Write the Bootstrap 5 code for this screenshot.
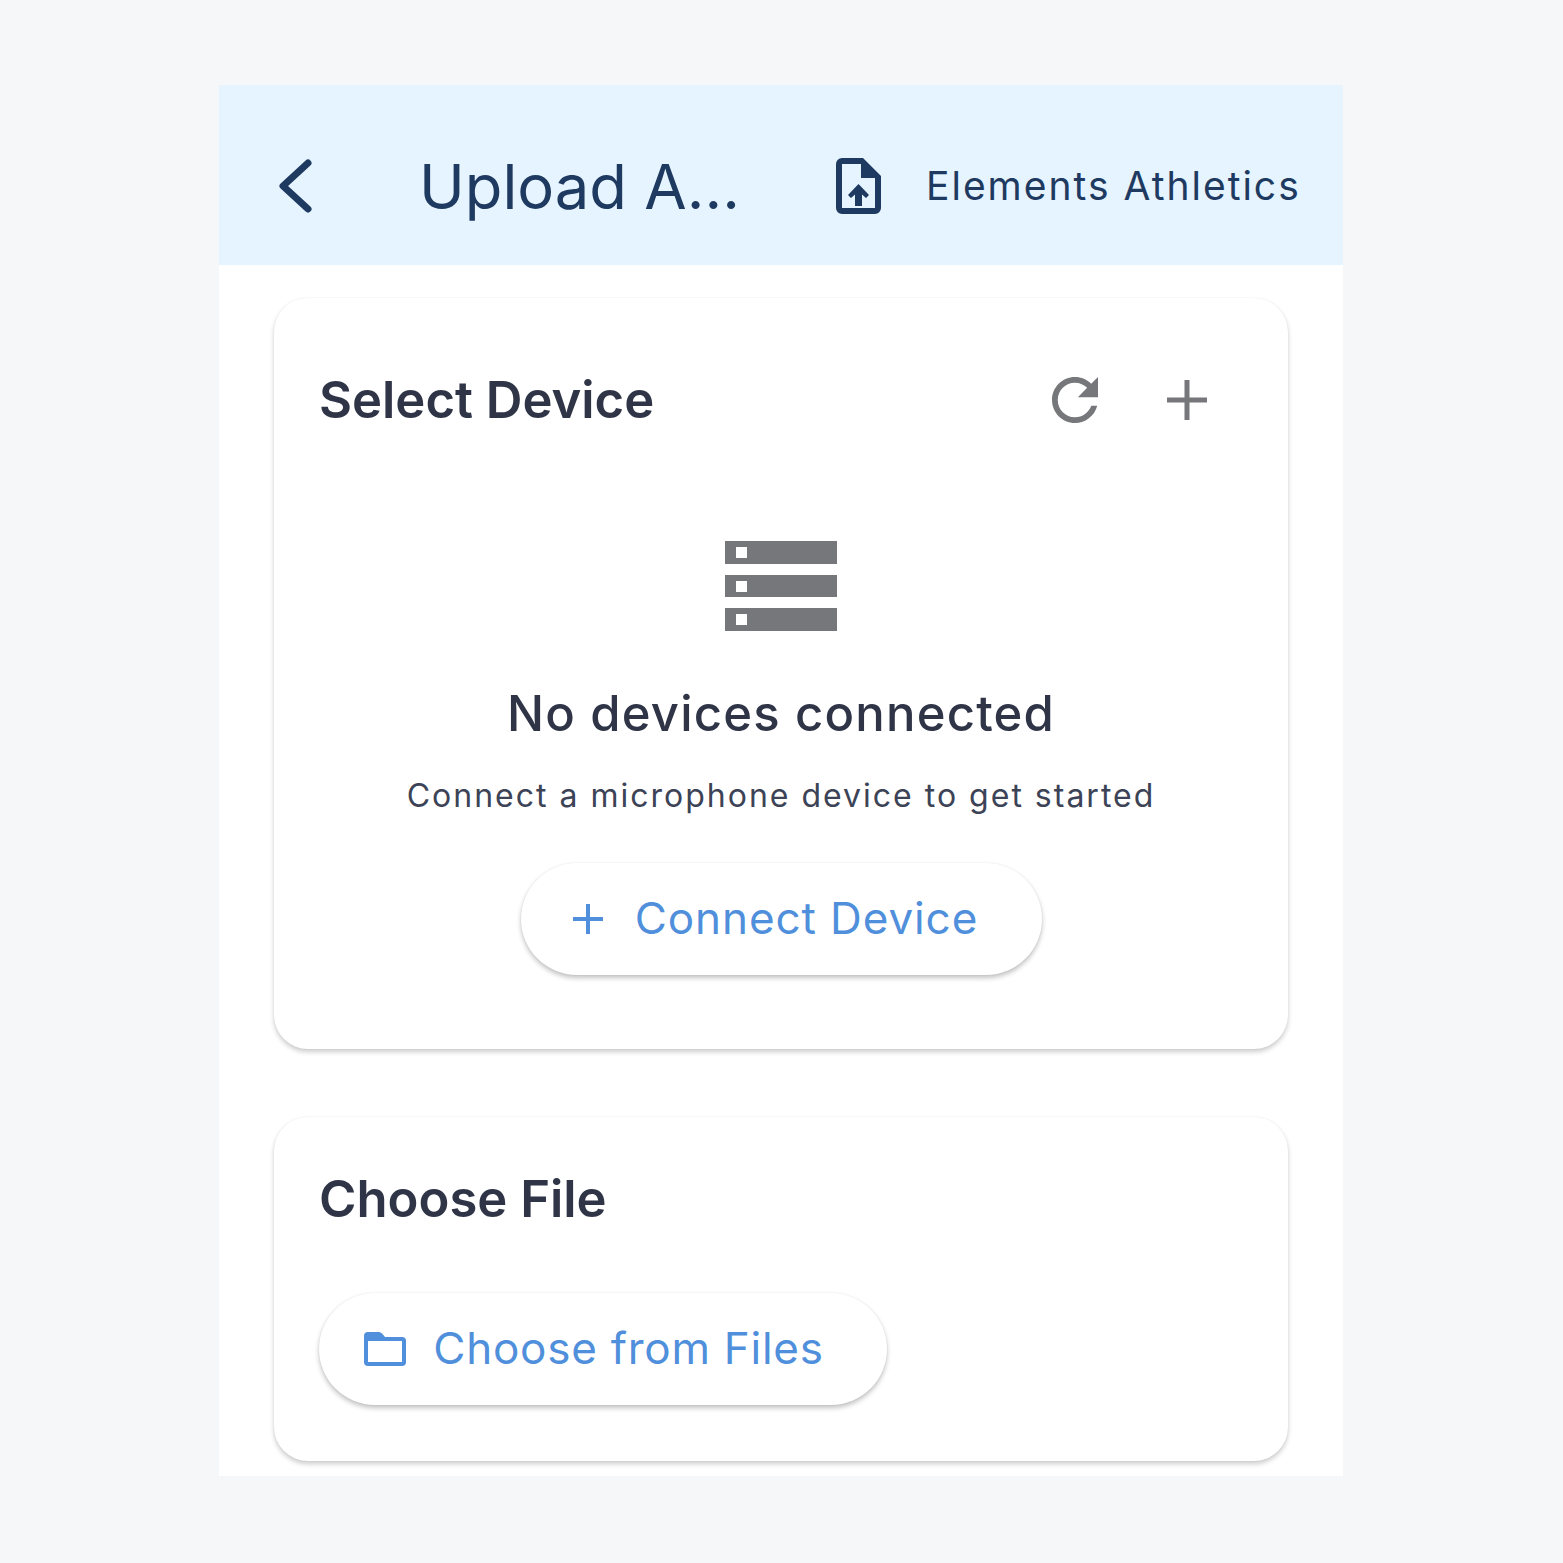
<!DOCTYPE html>
<html lang="en">
<head>
    <meta charset="UTF-8">
    <meta name="viewport" content="width=device-width, initial-scale=1.0">
    <title>Upload Audio</title>
    <link rel="stylesheet" href="https://cdn.jsdelivr.net/npm/bootstrap@5.3.0/dist/css/bootstrap.min.css">
    <style>
        body {
            font-family: Inter, "Liberation Sans", sans-serif;
            background: #f6f7f9;
            color: #2f3547;
            margin: 0;
            padding: 85px 0 0 219px;
        }
        .phone-frame {
            width: 1124px;
            height: 1391px;
            background: #fff;
            overflow: hidden;
        }
        .top-bar {
            height: 180px;
            background: #e5f4fe;
            color: #1f3a60;
            padding: 22px 0 0 60px;
        }
        .top-bar svg { display: block; }
        .top-title {
            font-size: 61.5px;
            line-height: 1;
            margin: 2px 0 0 106px;
            width: 417px;
        }
        .org-name {
            font-size: 39px;
            line-height: 1;
            letter-spacing: 2px;
            margin: 0 0 2px 45px;
            white-space: nowrap;
        }
        .panel {
            width: 1014px;
            margin-left: 55px;
            background: #fff;
            border-radius: 34px;
            box-shadow: 0 3px 5px rgba(0, 0, 0, .2), 0 0 2px rgba(0, 0, 0, .06);
            padding: 0 45px;
        }
        .device-panel { margin-top: 33px; height: 751px; padding-top: 72px; }
        .file-panel { margin-top: 68px; height: 344px; padding-top: 52px; }
        .panel-title {
            font-size: 50.8px;
            font-weight: 600;
            line-height: 60px;
            margin: 0;
        }
        .panel-tools { margin-right: 36px; gap: 69px; }
        .server-icon { margin-top: 111px; }
        .empty-title {
            font-size: 49px;
            font-weight: 500;
            line-height: 58px;
            letter-spacing: 1.2px;
            margin: 54px 0 0;
        }
        .empty-text {
            font-size: 32px;
            line-height: 40px;
            letter-spacing: 2px;
            color: #3d4356;
            margin: 33px 0 0;
        }
        .pill-btn {
            height: 112px;
            border: 0;
            border-radius: 56px;
            background: #fff;
            color: #4f8fdb;
            font-size: 44px;
            letter-spacing: .9px;
            box-shadow: 0 3px 5px rgba(0, 0, 0, .24), 0 0 2px rgba(0, 0, 0, .07);
        }
        .pill-btn:hover { background: #fff; color: #4f8fdb; }
        .pill-btn span { padding-bottom: 2px; }
        .connect-btn { width: 521px; margin-top: 47px; gap: 31px; padding: 0 24px 0 12px; }
        .files-btn { width: 568px; margin-top: 64px; gap: 27px; padding: 0 30px 0 12px; letter-spacing: .75px; }
    </style>
</head>
<body>

    <div class="phone-frame">
        <div class="top-bar d-flex align-items-center">
            <svg width="34" height="56" viewBox="0 0 34 56"><path d="M29 5 4 28 29 51" fill="none" stroke="#1f3a60" stroke-width="7" stroke-linecap="round" stroke-linejoin="round"/></svg>
            <div class="top-title">Upload A...</div>
            <svg width="45" height="56" viewBox="0 0 45 56">
                <path d="M6 0H27L45 18V50A6 6 0 0 1 39 56H6A6 6 0 0 1 0 50V6A6 6 0 0 1 6 0ZM6 6V50H39V20H25V6Z" fill="#1f3a60" fill-rule="evenodd"/>
                <path d="M22.500 26 33 37 30 40 26 36.500V48H19V36.500L15 40 12 37Z" fill="#1f3a60"/>
            </svg>
            <div class="org-name">Elements Athletics</div>
        </div>

        <div class="panel device-panel">
            <div class="d-flex align-items-center justify-content-between">
                <h2 class="panel-title">Select Device</h2>
                <div class="panel-tools d-flex align-items-center">
                    <svg width="46" height="46" viewBox="4 4 16 16"><path d="M17.650 6.350C16.200 4.900 14.210 4 12 4c-4.420 0-7.990 3.580-7.990 8s3.570 8 7.990 8c3.730 0 6.840-2.550 7.730-6h-2.080c-.82 2.330-3.040 4-5.650 4-3.310 0-6-2.690-6-6s2.690-6 6-6c1.660 0 3.140.69 4.220 1.780L13 11h7V4l-2.350 2.350z" fill="#76777b"/></svg>
                    <svg width="40" height="40" viewBox="0 0 40 40"><path d="M20 0V40M0 20H40" stroke="#76777b" stroke-width="5"/></svg>
                </div>
            </div>

            <div class="d-flex flex-column align-items-center text-center">
                <svg class="server-icon" width="112" height="90" viewBox="0 0 112 90">
                    <g fill="#76777b">
                        <path d="M0 0H112V23H0ZM11 6V17H22V6Z" fill-rule="evenodd"/>
                        <path d="M0 34H112V56H0ZM11 40V51H22V40Z" fill-rule="evenodd"/>
                        <path d="M0 67H112V90H0ZM11 73V84H22V73Z" fill-rule="evenodd"/>
                    </g>
                </svg>
                <h3 class="empty-title">No devices connected</h3>
                <p class="empty-text">Connect a microphone device to get started</p>
                <button type="button" class="btn pill-btn connect-btn d-flex align-items-center justify-content-center">
                    <svg width="32" height="32" viewBox="0 0 32 32"><path d="M16 1V31M1 16H31" stroke="#4f8fdb" stroke-width="4"/></svg>
                    <span>Connect Device</span>
                </button>
            </div>
        </div>

        <div class="panel file-panel">
            <h2 class="panel-title">Choose File</h2>
            <button type="button" class="btn pill-btn files-btn d-flex align-items-center justify-content-center">
                <svg width="42" height="34" viewBox="0 0 42 34"><path d="M4 0H15C16 0 17 .5 18 1.500L21 5H38A4 4 0 0 1 42 9V30A4 4 0 0 1 38 34H4A4 4 0 0 1 0 30V4A4 4 0 0 1 4 0ZM4 9V30H38V9Z" fill="#4f8fdb" fill-rule="evenodd"/></svg>
                <span>Choose from Files</span>
            </button>
        </div>
    </div>

    <script src="https://cdn.jsdelivr.net/npm/bootstrap@5.3.0/dist/js/bootstrap.bundle.min.js"></script>
</body>
</html>
